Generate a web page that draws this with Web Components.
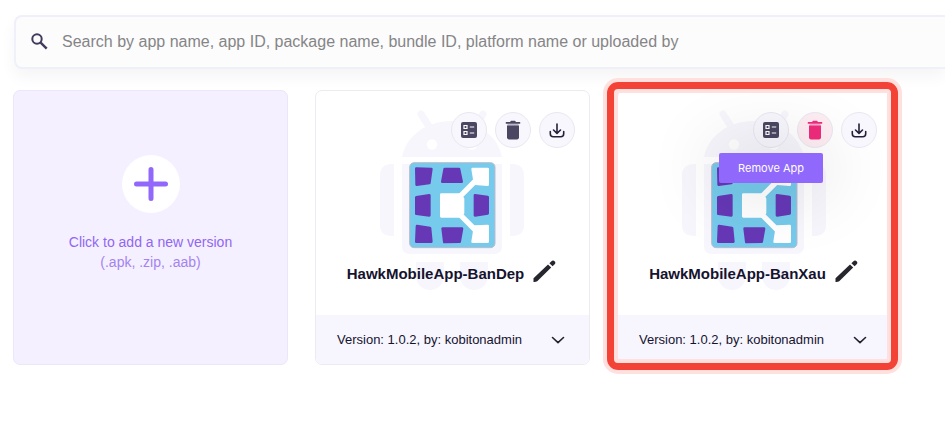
<!DOCTYPE html>
<html lang="en">
<head>
<meta charset="utf-8">
<title>App repository</title>
<style>
  body { margin: 0; background: #fff; color: #15132e; font-family: "Liberation Sans", Arial, sans-serif; }
</style>
</head>
<body>
<app-repository></app-repository>

<template id="t-repo">
  <style>
    :host { display: block; padding: 15px 0 48px 13px; }
    .grid { display: grid; grid-template-columns: repeat(3, minmax(0, 1fr)); gap: 27px; padding: 21px 53px 0 0; }
  </style>
  <search-bar></search-bar>
  <main class="grid">
    <add-version-card></add-version-card>
    <app-card><span slot="name">HawkMobileApp-BanDep</span><span slot="version">Version: 1.0.2, by: kobitonadmin</span></app-card>
    <app-card highlighted><span slot="name">HawkMobileApp-BanXau</span><span slot="version">Version: 1.0.2, by: kobitonadmin</span></app-card>
  </main>
</template>

<template id="t-search">
  <style>
    :host { display: flex; align-items: center; gap: 10px; box-sizing: border-box; height: 54px; margin-left: 1px; padding-left: 12px;
      background: #fcfcfc; border: 2px solid #f0f0fa; border-right: 0; border-radius: 8px 0 0 8px; box-shadow: 0 8px 16px rgba(0,0,0,.045); }
    label { display: flex; }
    svg { width: 24px; height: 24px; }
    input { flex: 1; min-width: 0; border: 0; outline: 0; padding: 0; background: none; font: 16px/24px "Liberation Sans", Arial, sans-serif; color: #444; }
    input::placeholder { color: #858587; opacity: 1; }
  </style>
  <label for="q" aria-label="Search"><svg viewBox="0 0 24 24" fill="none" stroke="#3f3c5c"><circle cx="9" cy="9" r="4.700" stroke-width="2"/><path d="M12.400 12.400l6.300 6.300" stroke-width="2.400"/></svg></label>
  <input id="q" type="text" placeholder="Search by app name, app ID, package name, bundle ID, platform name or uploaded by">
</template>

<template id="t-add">
  <style>
    :host { display: flex; }
    button { flex: 1; display: flex; flex-direction: column; align-items: center; box-sizing: border-box; margin: 0; padding: 64px 8px 0;
      background: #f4f0ff; border: 1px solid #ebe6fa; border-radius: 7px; color: #9166f2; font: 14px/20px "Liberation Sans", Arial, sans-serif; cursor: pointer; }
    svg { width: 58px; height: 58px; margin-bottom: 19px; }
    .types { color: #a583ee; }
  </style>
  <button type="button">
    <svg viewBox="0 0 58 58"><circle cx="29" cy="29" r="29" fill="#fff"/><path d="M29 14.500v29M14.500 29h29" stroke="#9168fb" stroke-width="5" stroke-linecap="round"/></svg>
    <span>Click to add a new version</span>
    <span class="types">(.apk, .zip, .aab)</span>
  </button>
</template>

<template id="t-card">
  <style>
    :host { display: flex; flex-direction: column; position: relative; box-sizing: border-box; background: #fff; border: 1px solid #ecebf2; border-radius: 7px; }
    :host([highlighted])::after { content: ""; position: absolute; z-index: 2; inset: -9px -7px -6px -11px; border: 7px solid #f24336; border-radius: 11px;
      box-shadow: 0 0 0 4px #ffe0de, inset 0 0 0 4px #ffe0de; pointer-events: none; }
    .media { display: grid; height: 224px; }
    .media > * { grid-area: 1 / 1; }
    app-art { justify-self: center; align-self: start; margin-top: 19px; }
    .actions { display: flex; justify-content: flex-end; align-self: start; gap: 8px; padding: 21px 14px 0 0; z-index: 1; }
    .title { display: flex; justify-content: center; align-items: center; align-self: end; gap: 6px; padding-bottom: 27px; }
    h2 { margin: 0; font-size: 15px; line-height: 24px; font-weight: 700; white-space: nowrap; }
    .edit, .toggle { display: flex; margin: 0; padding: 0; border: 0; background: none; cursor: pointer; }
    .edit svg { width: 28px; height: 28px; }
    footer { display: flex; align-items: center; justify-content: space-between; height: 49px; padding: 0 21px; background: #f7f6fe; border-radius: 0 0 6px 6px; font-size: 13px; line-height: 20px; }
    .toggle svg { width: 20px; height: 20px; }
  </style>
  <section class="media">
    <app-art></app-art>
    <div class="actions">
      <icon-action icon="details" label="App details"></icon-action>
      <icon-action class="remove" icon="trash" label="Remove App"></icon-action>
      <icon-action icon="download" label="Download"></icon-action>
    </div>
    <div class="title">
      <h2><slot name="name"></slot></h2>
      <button class="edit" type="button" aria-label="Rename app"><svg viewBox="0 3 28 28" fill="#26262e"><path d="M3.500 25V21.200L18 7.400L21.200 10.400L7.200 24.300Q5.500 25.300 3.500 25ZM19.400 6.200L21.200 4.400Q23 2.600 24.600 4.200T24.400 7.500L22.600 9.200Z"/></svg></button>
    </div>
  </section>
  <footer>
    <slot name="version"></slot>
    <button class="toggle" type="button" aria-label="Show versions"><svg viewBox="0 0 20 20" fill="none" stroke="#24222e" stroke-width="1.600" stroke-linecap="round" stroke-linejoin="round"><path d="M4.500 7.500l5.500 5.200L15.500 7.500"/></svg></button>
  </footer>
</template>

<template id="t-art">
  <style>:host { display: block; } svg { display: block; width: 144px; height: 182px; }</style>
  <svg viewBox="1 0 144 182" aria-hidden="true" overflow="visible">
    <g fill="#f7f6fd">
      <path d="M41 4l9 14M103 4l-9 14" stroke="#f7f6fd" stroke-width="7" stroke-linecap="round"/>
      <path d="M22 47C26 26 46 11 72 11S118 26 122 47Z"/>
      <path d="M14 54V126H12Q0 126 0 115V66Q0 54 12 54ZM130 54V126H132Q144 126 144 115V66Q144 54 132 54Z"/>
      <path d="M22 54H122V136Q122 144 114 144H30Q22 144 22 136Z"/>
      <path d="M36 152H64V166A14 14 0 0 1 36 166ZM80 152H108V166A14 14 0 0 1 80 166Z"/>
    </g>
    <circle cx="52" cy="34.500" r="5.200" fill="#fff"/><circle cx="92" cy="34.500" r="5.200" fill="#fff"/>
    <g transform="translate(20 45) scale(.3333)" stroke-linejoin="round">
      <rect x="29" y="23" width="256" height="255" rx="13" fill="#76caeb" stroke="#bdbccc" stroke-width="3"/>
      <g fill="#6638b6" stroke="#6638b6" stroke-width="8">
        <path d="M49 41L94 42L88 84L50 89ZM134 42H177L185 80H127ZM49 127L88 121V181L49 176ZM51 213L90 219L94 260H49ZM128 221H186L179 260L133 261ZM225 121L263 126V175L225 181Z"/>
      </g>
      <path d="M180 124L232 72M180 179L232 231" stroke="#fff" stroke-width="16"/>
      <path d="M124 119H181L189 131V174L181 184H124ZM218 42H263V89L225 86ZM225 215L263 213V260H218Z" fill="#fff" stroke="#fff" stroke-width="8"/>
    </g>
  </svg>
</template>

<template id="t-action">
  <style>
    :host { display: block; position: relative; }
    button { display: flex; align-items: center; justify-content: center; box-sizing: border-box; width: 36px; height: 36px; margin: 0; padding: 0;
      border: 1px solid #e9e8f1; border-radius: 50%; background: #f8f7fe; color: #4b4763; cursor: pointer; }
    :host([active]) button { background: #ffedf4; color: #f02c7c; }
    svg { width: 24px; height: 24px; flex: none; }
    .tip { position: absolute; right: 10px; top: 41px; padding: 5px 19px; border-radius: 2px; background: #9068fc; color: #fff; font: 11px/20px Inter, sans-serif; white-space: nowrap; box-shadow: 0 0 70px 8px rgba(0,0,0,.12); }
  </style>
  <button type="button"></button>
</template>

<script>
  const icons = {
    details: '<svg viewBox="0 0 24 24" fill="currentColor"><rect x="4" y="4" width="16" height="16" rx="2"/><path d="M7 7.500h3v3H7zM7 13.500h3v3H7zM12.800 9h4.400M12.800 15h4.400" fill="none" stroke="#fff" stroke-width="1.200"/></svg>',
    trash: '<svg viewBox="0 0 24 24" fill="currentColor"><path d="M4.800 4H9l1-1.200h4L15 4h4.200v1.800H4.800z"/><path d="M6.500 5.800h11v2h-11z" opacity=".35"/><path d="M6 7.600h12v12q0 1.800-1.800 1.800H7.800Q6 21.400 6 19.600z"/></svg>',
    download: '<svg viewBox="0 0 24 24" fill="none" stroke="#232139" stroke-width="1.600" stroke-linecap="round" stroke-linejoin="round"><path d="M5.300 13.500v2.200a3 3 0 0 0 3 3h7.400a3 3 0 0 0 3-3v-2.200M12 6v9.200M8.500 12l3.500 3.400 3.500-3.400"/></svg>'
  };

  class Base extends HTMLElement {
    constructor(id) {
      super();
      this.attachShadow({ mode: 'open' }).append(document.getElementById(id).content.cloneNode(true));
    }
  }

  customElements.define('icon-action', class extends Base {
    constructor() { super('t-action'); }
    connectedCallback() {
      const button = this.shadowRoot.querySelector('button');
      button.innerHTML = icons[this.getAttribute('icon')];
      button.setAttribute('aria-label', this.getAttribute('label'));
      if (this.hasAttribute('active') && !this.shadowRoot.querySelector('.tip')) {
        const tip = document.createElement('span');
        tip.className = 'tip';
        tip.setAttribute('role', 'tooltip');
        tip.textContent = this.getAttribute('label');
        this.shadowRoot.append(tip);
      }
    }
  });
  customElements.define('app-art', class extends Base { constructor() { super('t-art'); } });
  customElements.define('app-card', class extends Base {
    constructor() { super('t-card'); }
    connectedCallback() {
      if (this.hasAttribute('highlighted')) {
        const old = this.shadowRoot.querySelector('.remove');
        const active = document.createElement('icon-action');
        active.setAttribute('icon', 'trash');
        active.setAttribute('label', 'Remove App');
        active.setAttribute('active', '');
        old.replaceWith(active);
      }
    }
  });
  customElements.define('add-version-card', class extends Base { constructor() { super('t-add'); } });
  customElements.define('search-bar', class extends Base { constructor() { super('t-search'); } });
  customElements.define('app-repository', class extends Base { constructor() { super('t-repo'); } });
</script>
</body>
</html>
